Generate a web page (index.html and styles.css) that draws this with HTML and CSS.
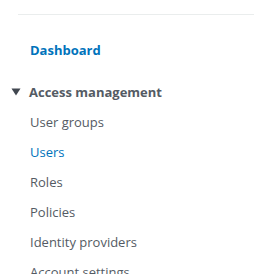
FILE: index.html
```html
<!DOCTYPE html>
<html lang="en">

<head>
    <meta charset="UTF-8">
    <meta name="viewport" content="width=device-width, initial-scale=1.0">
    <title>IAM navigation</title>
    <link rel="stylesheet" href="styles.css">
</head>

<body>
    <nav class="side-nav">
        <div class="divider"></div>
        <a class="nav-link top-link" href="#">Dashboard</a>
        <div class="section">
            <div class="section-title">
                <svg class="caret" width="10" height="8" viewBox="0 0 10 8">
                    <path d="M0.5 0.5 L9.5 0.5 L5 7.5 Z" fill="#414750" />
                </svg>
                <span>Access management</span>
            </div>
            <ul class="items">
                <li><a class="nav-link" href="#">User groups</a></li>
                <li><a class="nav-link active" href="#">Users</a></li>
                <li><a class="nav-link" href="#">Roles</a></li>
                <li><a class="nav-link" href="#">Policies</a></li>
                <li><a class="nav-link" href="#">Identity providers</a></li>
                <li><a class="nav-link" href="#">Account settings</a></li>
            </ul>
        </div>
    </nav>
</body>

</html>
```

FILE: styles.css
```css
* {
    margin: 0;
    padding: 0;
    box-sizing: border-box;
}

html,
body {
    background: #fff;
    font-family: "Open Sans", sans-serif;
    font-size: 13px;
    color: #545b64;
    overflow: hidden;
}

.divider {
    margin: 14px 0 20px 18px;
    border-top: 1px solid #eaeded;
}

.nav-link {
    display: block;
    height: 30px;
    line-height: 30px;
    padding-left: 30px;
    color: #545b64;
    text-decoration: none;
}

.top-link {
    color: #0073bb;
    font-weight: bold;
}

.section {
    margin-top: 12px;
}

.section-title {
    display: flex;
    align-items: center;
    gap: 8px;
    height: 30px;
    padding-left: 11px;
    font-weight: bold;
}

.items {
    list-style: none;
}

.nav-link.active {
    color: #0073bb;
}
```
